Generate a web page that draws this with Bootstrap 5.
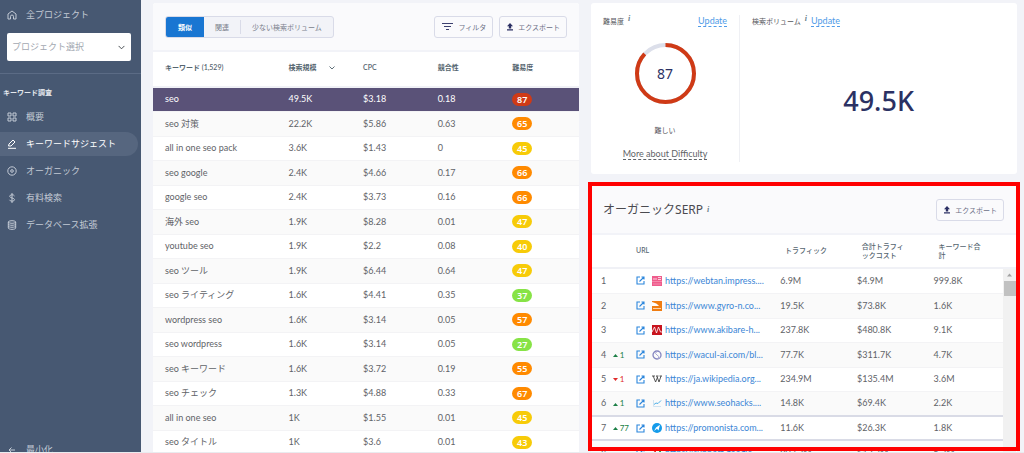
<!DOCTYPE html>
<html lang="ja">
<head>
<meta charset="utf-8">
<meta name="viewport" content="width=device-width, initial-scale=1">
<title>キーワードサジェスト</title>
<link href="https://cdn.jsdelivr.net/npm/bootstrap@5.3.0/dist/css/bootstrap.min.css" rel="stylesheet">
<style>
  body { font-family: Lato, "Noto Sans CJK JP", sans-serif; font-size: 9px; line-height: 12px; color: #5f6368; background: #f2f3f8; }
  svg { flex: none; display: block; }
  .app { height: 100vh; overflow: hidden; border-bottom: 1px solid #e9ebef; }

  /* sidebar */
  .side { width: 141px; flex: none; background: #475872; overflow: hidden; }
  .side a { color: #c3cad5; text-decoration: none; height: 24px; padding-left: 7px; gap: 9px; }
  .side a svg { width: 10px; height: 10px; fill: none; stroke: currentColor; stroke-width: 1; }
  .side a.current { color: #fff; background: #56667f; border-radius: 0 12px 12px 0; margin-right: 3px; }
  .side-top { padding: 3px 0 12px; border-bottom: 1px solid #5b6b85; }
  .side-title { font-size: 7px; font-weight: 600; color: #e4e8ee; padding: 12px 3px 7px; }
  .side-nav { gap: 3px; }
  .project { margin: 6px 10px 0 7px; width: auto; height: 28px; padding: 0 20px 0 5px; font-size: 9px; color: #a3a8b1; border: 0; border-radius: 2px; background-position: right 6px center; background-size: 7px 7px; }
  .side-bottom { margin-bottom: -10px; }

  /* two columns of panels */
  .panels { display: grid; grid-template-columns: 1fr 1fr; gap: 12px; padding: 3px 7px 0 12px; min-width: 0; }
  .panel { background: #fff; border-radius: 3px; }
  .panel-top { height: 47px; padding: 0 12px; background: #fafafc; border-radius: 3px 3px 0 0; }
  .tool { height: 22px; padding: 0 6px; font-size: 7px; line-height: 12px; color: #6c7086; background: #fafafc; border: 1px solid #d9dbe8; border-radius: 3px; gap: 4px; }
  .tools { gap: 6px; }
  .tabs { border: 1px solid #d9dbe8; border-radius: 3px; background: #f2f3f8; height: 22px; overflow: hidden; }
  .tabs button { border: 0; border-radius: 0; background: none; font-size: 7px; line-height: 12px; color: #7a7f8c; padding: 0 11px; }
  .tabs button.active { background: #1976d2; color: #fff; font-weight: 600; padding: 0 12px; }
  .tabs .rule { width: 1px; height: 14px; background: #d9dbe8; }

  /* tables */
  .grid-table { width: 100%; table-layout: fixed; margin: 0; }
  .grid-table th { height: 36px; padding: 0 0 3px 12px; font-size: 7px; line-height: 9px; font-weight: 600; color: #55656f; border-top: 2px solid #f2f3f8; border-bottom: 2px solid #f0f1f6; vertical-align: middle; }
  .grid-table td { height: 24px; padding: 0 0 0 12px; white-space: nowrap; vertical-align: middle; }
  .grid-table tbody tr:nth-child(even) td { height: 25px; background: #fafafa; border-top: 1px solid #f3f3f5; border-bottom: 1px solid #f3f3f5; }
  .grid-table tbody tr.picked td { background: #5a5278; color: #fff; }
  .score { display: inline-block; width: 20px; height: 13px; line-height: 13px; border-radius: 7px; text-align: center; font-weight: 600; font-family: "Noto Sans", sans-serif; color: #fff; vertical-align: middle; }
  .s-red { background: #cf3a16; } .s-orange { background: #ff8a00; } .s-yellow { background: #f7cb08; } .s-green { background: #87e346; }

  /* summary */
  .summary { height: 171px; padding: 12px 0; }
  .gauge-box { width: 149px; padding: 0 12px; border-right: 1px solid #eff0f4; }
  .caption-sm { font-size: 7px; color: #55565c; }
  .tip { font-style: italic; font-weight: 700; font-size: 8px; line-height: 8px; color: #69808b; font-family: "Liberation Serif", serif; align-self: flex-start; }
  .dash { border-bottom: 1px dashed currentColor; text-decoration: none; line-height: 11px; }
  .update { color: #4f9be8; }
  .gauge { position: relative; width: 61px; height: 61px; margin: 16px auto 0; }
  .gauge-num { position: absolute; inset: 0; font-family: "Noto Sans", sans-serif; font-size: 14px; color: #2b3163; }
  .volume { font-family: "Noto Sans", sans-serif; font-size: 27px; line-height: 34px; color: #2b3163; font-weight: 500; padding-top: 12px; }

  /* search results */
  .serp { position: relative; }
  .serp .panel-top { padding-right: 13px; }
  .serp h2 { font-family: "Noto Sans", "Noto Sans CJK JP", sans-serif; font-size: 12px; line-height: 16px; font-weight: 400; color: #4a4a50; margin: 0; }
  .serp .grid-table th, .serp .grid-table td { padding-left: 10px; }
  .serp .grid-table th { font-weight: 500; height: 34px; padding-bottom: 1px; }
  .serp .grid-table tbody tr.edge td { border-top: 2px solid #d9dbe6; border-bottom: 2px solid #d9dbe6; }
  .serp .link { color: #3b86d6; text-decoration: none; }
  .sites { gap: 3px; }
  .up, .down { font-size: 8px; }
  .up { color: #1b7f45; } .down { color: #e02a2a; }
  .scroll { width: 13px; flex: none; background: #f1f1f1; margin-right: 1px; }
  .thumb { height: 15px; background: #c1c1c1; margin: 0 0 0 1px; }
  .marker { position: absolute; inset: -4px -3px auto -3px; height: 269px; border: 4px solid #f00; pointer-events: none; }
</style>
</head>
<body>
<svg width="0" height="0" class="position-absolute" aria-hidden="true">
  <symbol id="open" viewBox="0 0 9 9"><path d="M4 1H1v7h7V5M5.500 1H8v2.500M8 1 3.500 5.500" fill="none" stroke="#2b86dc" stroke-width="1.100"/></symbol>
  <symbol id="export" viewBox="0 0 8 8"><path d="M4 0 7 3.200H5.200V5.600H2.800V3.200H1ZM1 6.300H7V7.600H1Z" fill="#2b2f63"/></symbol>
  <symbol id="tri-up" viewBox="0 0 5 3"><path d="M0 3 2.500 0 5 3Z" fill="currentColor"/></symbol>
  <symbol id="tri-down" viewBox="0 0 5 3"><path d="M0 0H5L2.500 3Z" fill="currentColor"/></symbol>
</svg>
<div class="app d-flex">
  <nav class="side d-flex flex-column" aria-label="メイン">
    <div class="side-top d-flex flex-column">
      <a href="#" class="d-flex align-items-center"><svg viewBox="0 0 10 10"><path d="M1 4 5 1 9 4V9H6.500V6.500a1.500 1.500 0 0 0-3 0V9H1Z"/></svg>全プロジェクト</a>
      <select class="form-select project" aria-label="プロジェクト選択"><option>プロジェクト選択</option></select>
    </div>
    <div class="side-title">キーワード調査</div>
    <div class="side-nav d-flex flex-column">
      <a href="#" class="d-flex align-items-center"><svg viewBox="0 0 10 10"><path d="M1 1H4V4H1ZM6 1H9V4H6ZM1 6H4V9H1ZM6 6H9V9H6Z"/></svg>概要</a>
      <a href="#" class="d-flex align-items-center current" aria-current="page"><svg viewBox="0 0 10 10"><path d="M1.500 7 2 5 6 1 8 3 4 7ZM1 9.300H9"/></svg>キーワードサジェスト</a>
      <a href="#" class="d-flex align-items-center"><svg viewBox="0 0 10 10"><circle cx="5" cy="5" r="4.200"/><circle cx="5" cy="5" r="1.300"/></svg>オーガニック</a>
      <a href="#" class="d-flex align-items-center"><svg viewBox="0 0 10 10"><path d="M5 0V10M7.500 3C7 1.300 2.700 1.300 2.700 3.300S7.500 4.700 7.500 6.700 2.900 8.700 2.500 6.800"/></svg>有料検索</a>
      <a href="#" class="d-flex align-items-center"><svg viewBox="0 0 10 10"><ellipse cx="5" cy="2" rx="3.700" ry="1.300"/><path d="M1.300 2V8C1.300 9.800 8.700 9.800 8.700 8V2M1.300 4C1.300 5.700 8.700 5.700 8.700 4M1.300 6C1.300 7.700 8.700 7.700 8.700 6"/></svg>データベース拡張</a>
    </div>
    <a href="#" class="side-bottom d-flex align-items-center mt-auto"><svg viewBox="0 0 10 10"><path d="M8 5H2M4.500 2.500 2 5 4.500 7.500"/></svg>最小化</a>
  </nav>

  <main class="panels flex-grow-1">
    <section class="panel">
      <div class="panel-top d-flex align-items-center">
        <div class="tabs d-flex align-items-center">
          <button type="button" class="active align-self-stretch">類似</button>
          <button type="button">関連</button>
          <span class="rule"></span>
          <button type="button">少ない検索ボリューム</button>
        </div>
        <div class="tools d-flex ms-auto">
          <button type="button" class="tool d-flex align-items-center"><svg width="13" height="9" viewBox="0 0 13 9"><path d="M1 1.500H12M3 4.500H10M5 7.500H8" stroke="#3d4170" stroke-width="1.200"/></svg>フィルタ</button>
          <button type="button" class="tool d-flex align-items-center"><svg width="8" height="8"><use href="#export"/></svg>エクスポート</button>
        </div>
      </div>
      <table class="grid-table">
        <colgroup><col style="width:29%"><col style="width:17.5%"><col style="width:17.5%"><col style="width:17.5%"><col></colgroup>
        <thead><tr><th>キーワード (1,529)</th><th><span class="d-flex align-items-center">検索規模<svg class="ms-auto me-3" width="6" height="4" viewBox="0 0 6 4"><path d="M.5.5 3 3 5.500.5" fill="none" stroke="#60707a"/></svg></span></th><th>CPC</th><th>競合性</th><th>難易度</th></tr></thead>
        <tbody>
          <tr class="picked"><td>seo</td><td>49.5K</td><td>$3.18</td><td>0.18</td><td><span class="score s-red">87</span></td></tr>
          <tr><td>seo 対策</td><td>22.2K</td><td>$5.86</td><td>0.63</td><td><span class="score s-orange">65</span></td></tr>
          <tr><td>all in one seo pack</td><td>3.6K</td><td>$1.43</td><td>0</td><td><span class="score s-yellow">45</span></td></tr>
          <tr><td>seo google</td><td>2.4K</td><td>$4.66</td><td>0.17</td><td><span class="score s-orange">66</span></td></tr>
          <tr><td>google seo</td><td>2.4K</td><td>$3.73</td><td>0.16</td><td><span class="score s-orange">66</span></td></tr>
          <tr><td>海外 seo</td><td>1.9K</td><td>$8.28</td><td>0.01</td><td><span class="score s-yellow">47</span></td></tr>
          <tr><td>youtube seo</td><td>1.9K</td><td>$2.2</td><td>0.08</td><td><span class="score s-yellow">40</span></td></tr>
          <tr><td>seo ツール</td><td>1.9K</td><td>$6.44</td><td>0.64</td><td><span class="score s-yellow">47</span></td></tr>
          <tr><td>seo ライティング</td><td>1.6K</td><td>$4.41</td><td>0.35</td><td><span class="score s-green">37</span></td></tr>
          <tr><td>wordpress seo</td><td>1.6K</td><td>$3.14</td><td>0.05</td><td><span class="score s-orange">57</span></td></tr>
          <tr><td>seo wordpress</td><td>1.6K</td><td>$3.14</td><td>0.05</td><td><span class="score s-green">27</span></td></tr>
          <tr><td>seo キーワード</td><td>1.6K</td><td>$3.72</td><td>0.19</td><td><span class="score s-orange">55</span></td></tr>
          <tr><td>seo チェック</td><td>1.3K</td><td>$4.88</td><td>0.33</td><td><span class="score s-orange">67</span></td></tr>
          <tr><td>all in one seo</td><td>1K</td><td>$1.55</td><td>0.01</td><td><span class="score s-yellow">45</span></td></tr>
          <tr><td>seo タイトル</td><td>1K</td><td>$3.6</td><td>0.01</td><td><span class="score s-yellow">43</span></td></tr>
        </tbody>
      </table>
    </section>

    <div class="d-flex flex-column" style="gap:12px">
      <section class="panel summary d-flex">
        <div class="gauge-box d-flex flex-column">
          <div class="d-flex align-items-center gap-1"><span class="caption-sm">難易度</span><span class="tip">i</span><a href="#" class="dash update ms-auto">Update</a></div>
          <div class="gauge">
            <svg width="61" height="61" viewBox="0 0 61 61"><circle cx="30.500" cy="30.500" r="28.500" fill="none" stroke="#dcdfea" stroke-width="4"/><circle cx="30.500" cy="30.500" r="28.500" fill="none" stroke="#cf3a16" stroke-width="4" pathLength="100" stroke-dasharray="87 13" transform="rotate(-90 30.500 30.500)"/></svg>
            <span class="gauge-num d-flex align-items-center justify-content-center">87</span>
          </div>
          <div class="caption-sm text-center mt-3 pt-1">難しい</div>
          <div class="text-center pt-2 mt-1"><a href="#" class="dash text-reset">More about Difficulty</a></div>
        </div>
        <div class="flex-grow-1 px-2 mx-1 d-flex flex-column">
          <div class="d-flex align-items-center gap-1"><span class="caption-sm">検索ボリューム</span><span class="tip">i</span><a href="#" class="dash update">Update</a></div>
          <div class="volume flex-grow-1 d-flex align-items-center justify-content-center">49.5K</div>
        </div>
      </section>

      <section class="panel serp">
        <div class="panel-top d-flex align-items-center gap-1">
          <h2>オーガニックSERP</h2><span class="tip align-self-center">i</span>
          <button type="button" class="tool d-flex align-items-center ms-auto"><svg width="8" height="8"><use href="#export"/></svg>エクスポート</button>
        </div>
        <table class="grid-table">
          <colgroup><col style="width:8.2%"><col style="width:35%"><col style="width:18%"><col style="width:18%"><col></colgroup>
          <thead><tr><th></th><th>URL</th><th>トラフィック</th><th>合計トラフィ<br>ックコスト</th><th>キーワード合<br>計</th></tr></thead>
        </table>
        <div class="d-flex">
          <table class="grid-table">
            <colgroup><col style="width:8.500%"><col style="width:35%"><col style="width:18.600%"><col style="width:18.600%"><col></colgroup>
            <tbody>
              <tr><td>1</td><td><div class="sites d-flex align-items-center"><svg class="me-1" width="9" height="9"><use href="#open"/></svg><svg width="10" height="10" viewBox="0 0 10 10"><path fill="#ef5c8c" d="M0 0H10V10H0Z"/><path d="M1 3H5M6 1.500H9M6 3.500H9" stroke="#fbd0de"/><path d="M0 5.500H10M1 8H9" stroke="#f48bae"/></svg><a href="#" class="link">https://webtan.impress....</a></div></td><td>6.9M</td><td>$4.9M</td><td>999.8K</td></tr>
              <tr><td>2</td><td><div class="sites d-flex align-items-center"><svg class="me-1" width="9" height="9"><use href="#open"/></svg><svg width="10" height="10" viewBox="0 0 10 10"><path fill="#f07d12" d="M0 0H10V10H0Z"/><path fill="#fff" d="M0 1Q5 2 7 5L0 5Z"/><path d="M1 7.500H9" stroke="#fbd3ac"/></svg><a href="#" class="link">https://www.gyro-n.co...</a></div></td><td>19.5K</td><td>$73.8K</td><td>1.6K</td></tr>
              <tr><td>3</td><td><div class="sites d-flex align-items-center"><svg class="me-1" width="9" height="9"><use href="#open"/></svg><svg width="10" height="10" viewBox="0 0 10 10"><path fill="#c8141e" d="M0 0H10V10H0Z"/><path d="M0 7 2.500 2 4.500 8 6.500 2 8.500 7H10" fill="none" stroke="#fff" stroke-width=".8"/></svg><a href="#" class="link">https://www.akibare-h...</a></div></td><td>237.8K</td><td>$480.8K</td><td>9.1K</td></tr>
              <tr><td>4 <span class="up ms-1"><svg class="d-inline" width="5" height="3"><use href="#tri-up"/></svg> 1</span></td><td><div class="sites d-flex align-items-center"><svg class="me-1" width="9" height="9"><use href="#open"/></svg><svg width="10" height="10" viewBox="0 0 10 10"><circle cx="5" cy="5" r="4" fill="none" stroke="#8485c0" stroke-width="1.300"/><path d="M5 1Q2 4 5 5T6 9" fill="none" stroke="#a5a5d4"/></svg><a href="#" class="link">https://wacul-ai.com/bl...</a></div></td><td>77.7K</td><td>$311.7K</td><td>4.7K</td></tr>
              <tr><td>5 <span class="down ms-1"><svg class="d-inline" width="5" height="3"><use href="#tri-down"/></svg> 1</span></td><td><div class="sites d-flex align-items-center"><svg class="me-1" width="9" height="9"><use href="#open"/></svg><svg width="10" height="10" viewBox="0 0 10 10"><path d="M0 2H3M4 2H6.500M7.500 2H10M1.200 2 3.600 8 5.600 3M4.800 2 7 8 9 2" fill="none" stroke="#444" stroke-width=".9"/></svg><a href="#" class="link">https://ja.wikipedia.org...</a></div></td><td>234.9M</td><td>$135.4M</td><td>3.6M</td></tr>
              <tr><td>6 <span class="up ms-1"><svg class="d-inline" width="5" height="3"><use href="#tri-up"/></svg> 1</span></td><td><div class="sites d-flex align-items-center"><svg class="me-1" width="9" height="9"><use href="#open"/></svg><svg width="10" height="10" viewBox="0 0 10 10"><path d="M1.500 2V8.500H9" fill="none" stroke="#cfe3f2"/><path d="M2 6.500 4 5 6 5.500 9 2.500" fill="none" stroke="#4fb0e8"/></svg><a href="#" class="link">https://www.seohacks....</a></div></td><td>14.8K</td><td>$69.4K</td><td>2.2K</td></tr>
              <tr class="edge"><td>7 <span class="up ms-1"><svg class="d-inline" width="5" height="3"><use href="#tri-up"/></svg> 77</span></td><td><div class="sites d-flex align-items-center"><svg class="me-1" width="9" height="9"><use href="#open"/></svg><svg width="10" height="10" viewBox="0 0 10 10"><circle cx="5" cy="5" r="5" fill="#149bea"/><path d="M8 1.800 6.500 7.500 5 5.800 2 8 4 4.500Z" fill="#fff"/></svg><a href="#" class="link">https://promonista.com...</a></div></td><td>11.6K</td><td>$26.3K</td><td>1.8K</td></tr>
              <tr><td>8</td><td><div class="sites d-flex align-items-center"><svg class="me-1" width="9" height="9"><use href="#open"/></svg><svg width="10" height="10" viewBox="0 0 10 10"><path d="M1 5 4 1V8Z" fill="#d93a2b"/><path d="M6 1H9V8Z" fill="#2d9c4f"/></svg><a href="#" class="link">https://support.google...</a></div></td><td>903.2M</td><td>$12.3M</td><td>5.2M</td></tr>
            </tbody>
          </table>
          <div class="scroll" aria-hidden="true"><svg class="mx-auto my-1" width="5" height="4" viewBox="0 0 5 3"><path d="M0 3 2.500 0 5 3Z" fill="#a3a3a3"/></svg><div class="thumb"></div></div>
        </div>
        <div class="marker"></div>
      </section>
    </div>
  </main>
</div>
<script src="https://cdn.jsdelivr.net/npm/bootstrap@5.3.0/dist/js/bootstrap.bundle.min.js"></script>
</body>
</html>
